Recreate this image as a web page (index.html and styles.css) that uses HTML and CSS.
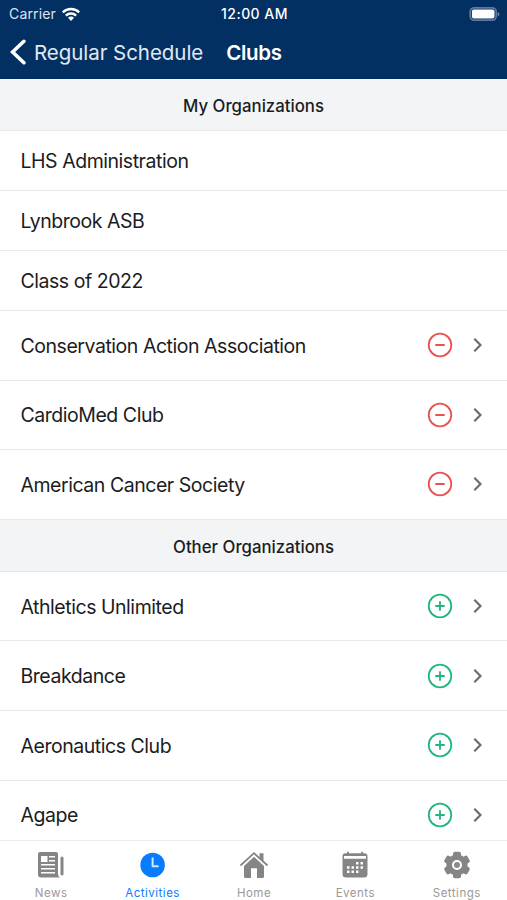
FILE: index.html
```html
<!DOCTYPE html>
<html lang="en">
<head>
<meta charset="utf-8">
<title>Clubs</title>
<link rel="stylesheet" href="styles.css">
</head>
<body>
<div class="app">
  <header class="top">
    <div class="status">
      <div class="carrier"><span>Carrier</span>
        <svg class="wifi" viewBox="0 0 18 14" width="18" height="14"><path d="M0 4.500a12.800 12.800 0 0 1 18 0l-1.600 1.700a10.500 10.500 0 0 0-14.800 0zM3 7.700a8.500 8.500 0 0 1 12 0l-1.700 1.700a6.100 6.100 0 0 0-8.600 0zM6 10.800a4.200 4.200 0 0 1 6 0l-3 3.100z" fill="#fff"/></svg>
      </div>
      <span class="time">12:00 AM</span>
      <svg class="battery" viewBox="0 0 31 14" width="31" height="14"><rect x="1.200" y=".8" width="26" height="12.400" rx="4" fill="none" stroke="#5f789b" stroke-width="1.700"/><rect x="2.900" y="2.400" width="22.600" height="9.200" rx="2" fill="#fff"/><path d="M28.600 5v4.300q1.800-.7 1.800-2.150T28.600 5z" fill="#7187a6"/></svg>
    </div>
    <nav class="nav">
      <svg class="back" viewBox="0 0 16 26" width="16" height="26"><path d="M13.900 2.300L2.600 13l11.300 10.700" fill="none" stroke="#fff" stroke-width="3.600" stroke-linecap="round"/></svg>
      <span class="back-label">Regular Schedule</span>
      <h1>Clubs</h1>
    </nav>
  </header>
  <main>
    <h2>My Organizations</h2>
    <div class="row short"><span>LHS Administration</span></div>
    <div class="row short"><span>Lynbrook ASB</span></div>
    <div class="row short"><span>Class of 2022</span></div>
    <div class="row"><span>Conservation Action Association</span><svg class="icon minus" viewBox="0 0 26 26"><use href="#minus"/></svg><svg class="chevron" viewBox="0 0 10 16"><use href="#chevron"/></svg></div>
    <div class="row"><span>CardioMed Club</span><svg class="icon minus" viewBox="0 0 26 26"><use href="#minus"/></svg><svg class="chevron" viewBox="0 0 10 16"><use href="#chevron"/></svg></div>
    <div class="row"><span>American Cancer Society</span><svg class="icon minus" viewBox="0 0 26 26"><use href="#minus"/></svg><svg class="chevron" viewBox="0 0 10 16"><use href="#chevron"/></svg></div>
    <h2>Other Organizations</h2>
    <div class="row"><span>Athletics Unlimited</span><svg class="icon plus" viewBox="0 0 26 26"><use href="#plus"/></svg><svg class="chevron" viewBox="0 0 10 16"><use href="#chevron"/></svg></div>
    <div class="row"><span>Breakdance</span><svg class="icon plus" viewBox="0 0 26 26"><use href="#plus"/></svg><svg class="chevron" viewBox="0 0 10 16"><use href="#chevron"/></svg></div>
    <div class="row"><span>Aeronautics Club</span><svg class="icon plus" viewBox="0 0 26 26"><use href="#plus"/></svg><svg class="chevron" viewBox="0 0 10 16"><use href="#chevron"/></svg></div>
    <div class="row"><span>Agape</span><svg class="icon plus" viewBox="0 0 26 26"><use href="#plus"/></svg><svg class="chevron" viewBox="0 0 10 16"><use href="#chevron"/></svg></div>
  </main>
  <footer class="tabs">
    <div class="tab">
      <svg viewBox="0 0 28 28"><path fill="currentColor" fill-rule="evenodd" d="M3 1h16q2 0 2 2v20q0 2.500 2 3.500H4q-3 0-3-3V3q0-2 2-2zM4 5v6h6.500V5zM12 5v1.600h6V5zM12 9v1.600h6V9zM4 13v1.600h14V13zM4 17v1.600h14V17zM4 21v1.600h14V21z"/><path d="M25 7v16" stroke="currentColor" stroke-width="3" stroke-linecap="round"/></svg>
      <span>News</span>
    </div>
    <div class="tab active">
      <svg viewBox="0 0 28 28"><circle cx="13.600" cy="14" r="12.300" fill="currentColor"/><path d="M13.600 6.500v8.800h6" fill="none" stroke="#d5e8ff" stroke-width="2"/></svg>
      <span>Activities</span>
    </div>
    <div class="tab">
      <svg viewBox="0 0 28 28"><path d="M1 14L14 2.200 27 14" fill="none" stroke="currentColor" stroke-width="1.800" stroke-linecap="round"/><path d="M19.500 2.200h4v8l-4-3.600zM14 5.800L24 15v10.500q0 1.500-1.500 1.500H17v-9.800h-6V27H5.500q-1.500 0-1.500-1.500V15z" fill="currentColor"/></svg>
      <span>Home</span>
    </div>
    <div class="tab">
      <svg viewBox="0 0 28 28"><path fill="currentColor" fill-rule="evenodd" d="M6 .8h1.800v1.400h12.400V.8H22v1.400h1.500q3 0 3 3V23q0 3.500-3.500 3.500H5q-3.500 0-3.500-3.500V5.200q0-3 3-3H6zM3 5v2.800h22V5zM15 11v2.500h2.500V11zM19.500 11v2.500H22V11zM6 15.300v2.500h2.500v-2.500zM10.500 15.300v2.500H13v-2.500zM15 15.300v2.500h2.500v-2.500zM19.500 15.300v2.500H22v-2.500zM6 19.600v2.500h2.500v-2.500zM10.500 19.600v2.500H13v-2.500zM15 19.600v2.500h2.500v-2.500z"/></svg>
      <span>Events</span>
    </div>
    <div class="tab">
      <svg viewBox="0 0 28 28"><g fill="currentColor"><circle cx="14" cy="14" r="10.600"/><rect x="10" y=".7" width="8" height="26.600" rx="2"/><rect x="10" y=".7" width="8" height="26.600" rx="2" transform="rotate(60 14 14)"/><rect x="10" y=".7" width="8" height="26.600" rx="2" transform="rotate(120 14 14)"/></g><circle cx="14" cy="14" r="4" fill="#8b8b8b" stroke="#fff" stroke-width="2"/></svg>
      <span>Settings</span>
    </div>
  </footer>
</div>
<svg class="defs" aria-hidden="true">
  <defs>
    <g id="minus" fill="none" stroke="currentColor" stroke-width="1.800" stroke-linecap="round"><circle cx="13" cy="13" r="11.300"/><path d="M9 13h8"/></g>
    <g id="plus" fill="none" stroke="currentColor" stroke-width="1.800" stroke-linecap="round"><circle cx="13" cy="13" r="11.300"/><path d="M9 13h8M13 9v8"/></g>
    <path id="chevron" d="M2.300 1.800L8.500 8l-6.200 6.200" fill="none" stroke="currentColor" stroke-width="2.200"/>
  </defs>
</svg>
</body>
</html>
```
FILE: styles.css
```css
* { box-sizing: border-box; }
body { margin: 0; background: #fff; font-family: Inter, "Liberation Sans", sans-serif; color: #1b1c1e; }
.app { width: 507px; height: 900px; display: flex; flex-direction: column; overflow: hidden; }
svg { display: block; flex: none; }
.top { height: 79px; background: #033063; color: #fff; flex: none; }
.status { height: 27px; padding: 0 7px 0 9px; display: grid; grid-template-columns: 1fr auto 1fr; align-items: center; font-size: 14px; line-height: 27px; }
.carrier { display: flex; align-items: center; gap: 6px; color: #dbe4ef; letter-spacing: .15px; }
.time { font-weight: 500; letter-spacing: .45px; }
.battery { justify-self: end; }
.nav { height: 50px; padding-left: 10px; display: flex; align-items: center; line-height: 52px; }
.back-label { margin: 2px 0 0 8px; font-size: 20.500px; color: #e1e9f3; letter-spacing: -.05px; }
h1 { margin: 2px 0 0 23px; font-size: 20.500px; font-weight: 600; letter-spacing: -.3px; }
main { flex: 1; min-height: 0; overflow: hidden; }
h2 { margin: 0; height: 52px; line-height: 54px; border-bottom: 1px solid #e6e8ea; background: #f2f4f6; text-align: center; font-size: 16.800px; font-weight: 500; letter-spacing: 0; }
.row { height: 69.600px; padding: 0 25.500px 0 20.500px; display: flex; align-items: center; border-bottom: 1.500px solid #e9e9ea; font-size: 19.500px; letter-spacing: -.46px; }
.row.short { height: 60px; }
.row span { flex: 1; padding-top: 1.200px; }
.icon { width: 26px; height: 26px; margin-right: 18.500px; }
.chevron { width: 10px; height: 16px; }
.minus { color: #ec5151; }
.plus { color: #20b77d; }
.chevron { color: #6b6c73; }
.tabs { height: 60px; flex: none; border-top: 1px solid #ededed; background: #fff; display: grid; grid-template-columns: repeat(5, 1fr); }
.tab { display: flex; flex-direction: column; align-items: center; padding-top: 10px; color: #858585; }
.tab svg { width: 28px; height: 28px; margin-left: 1px; }
.tab span { margin-top: 5px; font-size: 11.500px; line-height: 18px; color: #999; letter-spacing: .5px; margin-left: 1px; }
.tab.active, .tab.active span { color: #087cff; }
.defs { position: absolute; width: 0; height: 0; }
```
